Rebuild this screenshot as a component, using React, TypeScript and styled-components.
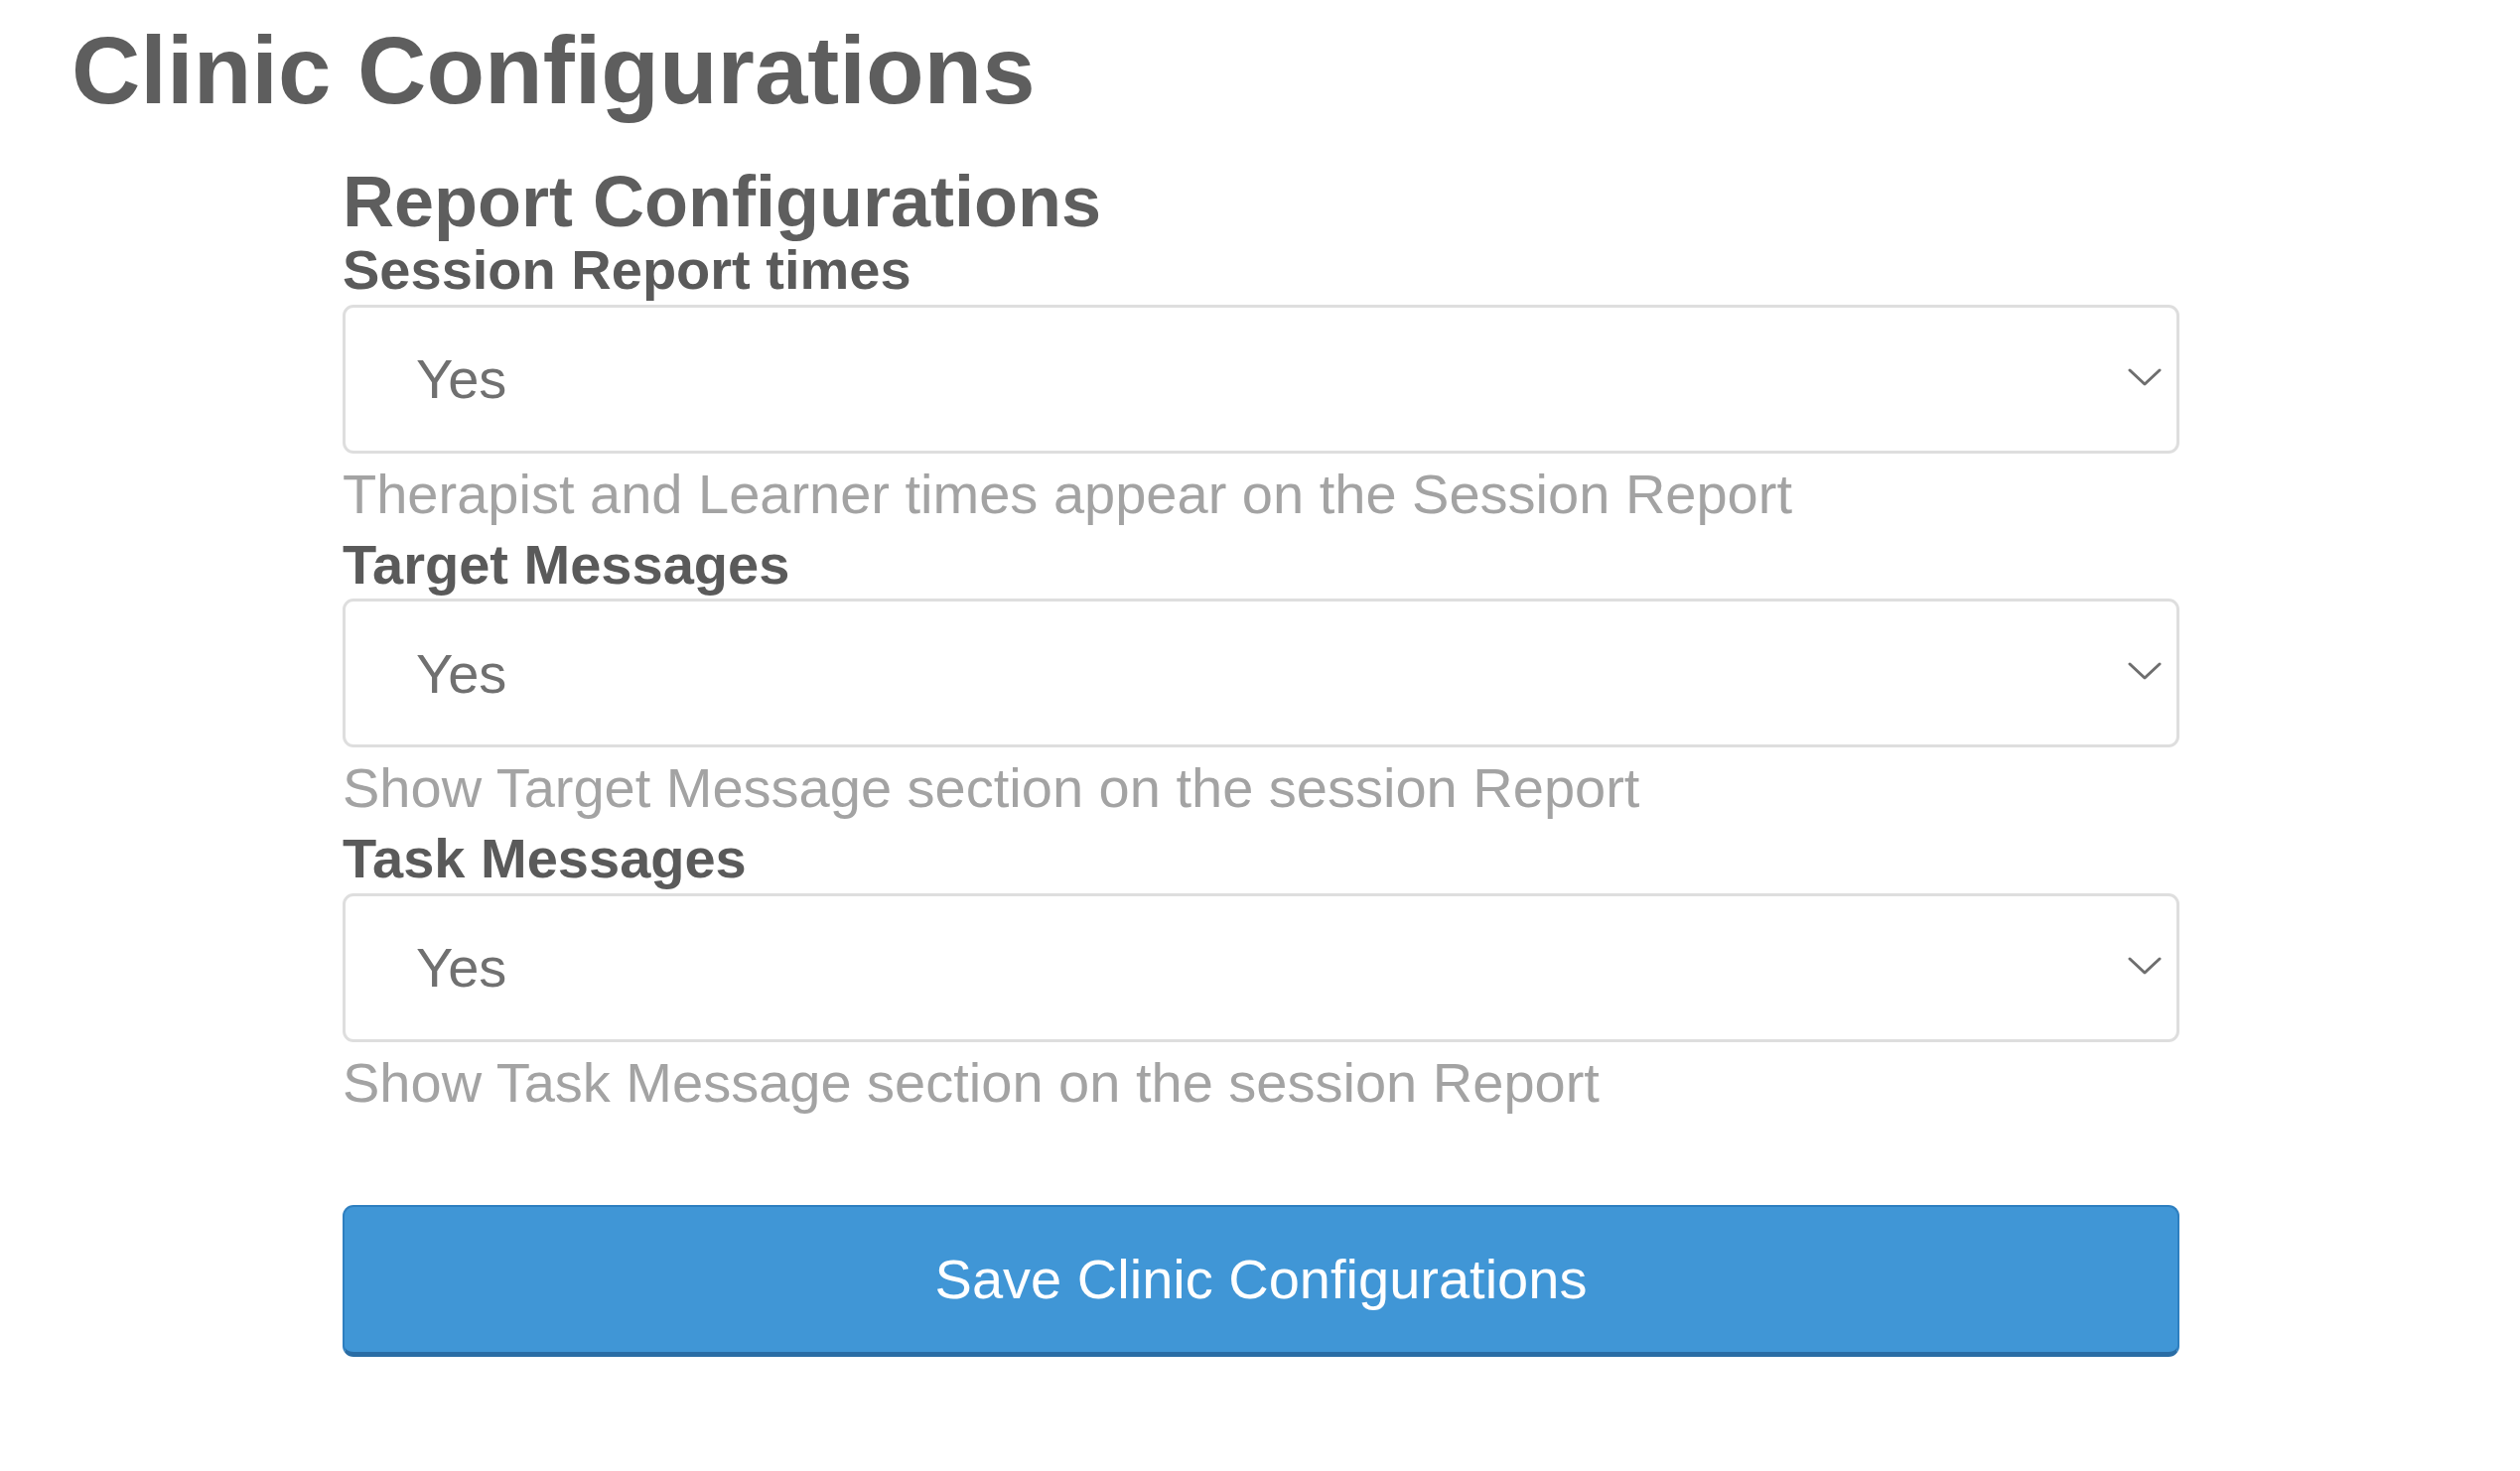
import React from "react";
import styled, { createGlobalStyle } from "styled-components";

const GlobalStyle = createGlobalStyle`
  html, body {
    margin: 0;
    padding: 0;
    background: #ffffff;
    font-family: "Liberation Sans", Arial, Helvetica, sans-serif;
  }
  * { box-sizing: border-box; }
`;

const Page = styled.div`
  padding: 18px 0 0 72px;
`;

const Title = styled.h1`
  margin: 0;
  font-size: 96px;
  line-height: 1.1;
  font-weight: 700;
  color: #5e5e5e;
`;

const Form = styled.form`
  margin: 42px 0 0 273px;
  width: 1850px;
  display: flex;
  flex-direction: column;
`;

const SectionTitle = styled.h2`
  margin: 0;
  font-size: 72px;
  line-height: 1.05;
  font-weight: 700;
  color: #5e5e5e;
`;

const Field = styled.div`
  display: flex;
  flex-direction: column;
`;

const Label = styled.label`
  font-size: 56px;
  line-height: 1.1;
  font-weight: 700;
  color: #5a5a5a;
`;

const SelectWrap = styled.div`
  position: relative;
  margin-top: 4px;
`;

const Select = styled.select`
  appearance: none;
  -webkit-appearance: none;
  width: 100%;
  height: 150px;
  border: 3px solid #dedede;
  border-radius: 11px;
  background: #ffffff;
  padding: 0 90px 0 71px;
  font-family: "Liberation Sans", Arial, Helvetica, sans-serif;
  font-size: 56px;
  color: #707070;
  outline: none;
`;

const Chevron = styled.svg`
  position: absolute;
  right: 18px;
  top: 50%;
  width: 34px;
  height: 19px;
  margin-top: -11px;
  pointer-events: none;
`;

const Help = styled.p`
  margin: 1px 0 0;
  font-size: 56px;
  line-height: 80px;
  color: #a3a3a3;
`;

const SaveButton = styled.button`
  margin-top: 83px;
  width: 100%;
  height: 153px;
  background: #4096d6;
  border: 2px solid #2e7fc0;
  border-bottom-width: 5px;
  border-bottom-color: #2a6da5;
  border-radius: 11px;
  color: #ffffff;
  font-family: "Liberation Sans", Arial, Helvetica, sans-serif;
  font-size: 56px;
  padding: 0;
  cursor: pointer;
`;

const fields = [
  {
    id: "session-report-times",
    label: "Session Report times",
    help: "Therapist and Learner times appear on the Session Report",
  },
  {
    id: "target-messages",
    label: "Target Messages",
    help: "Show Target Message section on the session Report",
  },
  {
    id: "task-messages",
    label: "Task Messages",
    help: "Show Task Message section on the session Report",
  },
];

export default function App() {
  return (
    <>
      <GlobalStyle />
      <Page>
        <Title>Clinic Configurations</Title>
        <Form onSubmit={(e) => e.preventDefault()}>
          <SectionTitle>Report Configurations</SectionTitle>
          {fields.map((f) => (
            <Field key={f.id}>
              <Label htmlFor={f.id}>{f.label}</Label>
              <SelectWrap>
                <Select id={f.id} defaultValue="yes">
                  <option value="yes">Yes</option>
                  <option value="no">No</option>
                </Select>
                <Chevron viewBox="0 0 34 19" fill="none">
                  <path
                    d="M2 2 L17 16 L32 2"
                    stroke="#6e6e6e"
                    strokeWidth="3"
                    strokeLinecap="round"
                    strokeLinejoin="round"
                  />
                </Chevron>
              </SelectWrap>
              <Help>{f.help}</Help>
            </Field>
          ))}
          <SaveButton type="submit">Save Clinic Configurations</SaveButton>
        </Form>
      </Page>
    </>
  );
}
